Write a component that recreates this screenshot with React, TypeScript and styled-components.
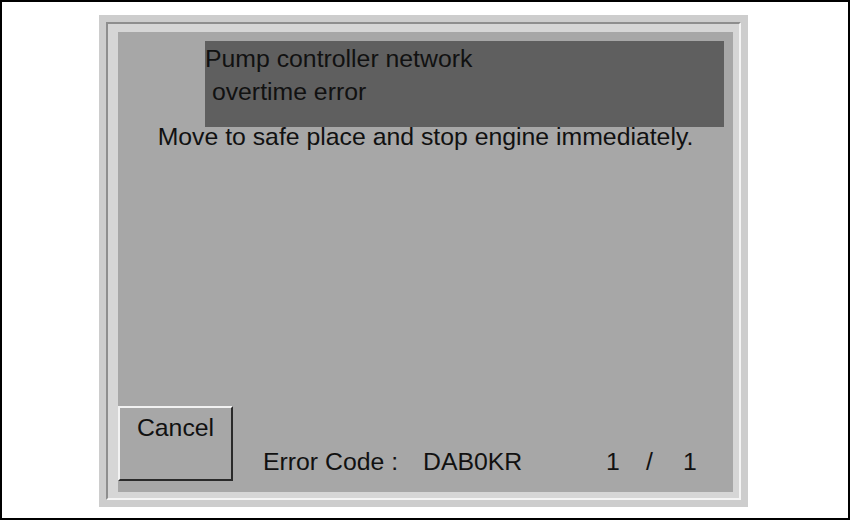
import { createGlobalStyle } from 'styled-components'
import styled from 'styled-components'

const GlobalStyle = createGlobalStyle`
  html, body {
    margin: 0;
    padding: 0;
    background: #fff;
  }
  body {
    font-family: 'Liberation Sans', Arial, sans-serif;
    color: #111;
  }
`

const Screen = styled.div`
  box-sizing: border-box;
  width: 850px;
  height: 520px;
  border: 2px solid #000;
  background: #fff;
  padding: 13px 0 0 97px;
`

const OuterFrame = styled.div`
  box-sizing: border-box;
  width: 649px;
  height: 492px;
  background: #cdcdcd;
  padding: 7px;
`

const InnerFrame = styled.div`
  box-sizing: border-box;
  height: 100%;
  background: #d6d6d6;
  border-style: solid;
  border-width: 2px;
  border-color: #8e8e8e #f4f4f4 #f4f4f4 #8e8e8e;
  padding: 8px 6px 6px 10px;
`

const Panel = styled.div`
  height: 100%;
  background: #a7a7a7;
  display: flex;
  flex-direction: column;
  font-size: 24.8px;
`

const TitleBar = styled.div`
  height: 86px;
  margin: 9px 9px 0 87px;
  padding-top: 1px;
  box-sizing: border-box;
  background: #5f5f5f;
  line-height: 33px;
  white-space: pre;
`

const Message = styled.div`
  text-align: center;
  line-height: 18px;
  margin-top: 1px;
`

const BottomRow = styled.div`
  margin-top: auto;
  margin-bottom: 11px;
  display: flex;
  align-items: flex-end;
`

const CancelButton = styled.button`
  box-sizing: border-box;
  width: 115px;
  height: 75px;
  margin: 0;
  padding: 6px 0 0;
  background: #a7a7a7;
  border-style: solid;
  border-width: 2px;
  border-color: #f2f2f2 #2a2a2a #2a2a2a #f2f2f2;
  font-family: inherit;
  font-size: inherit;
  color: #111;
  line-height: 28px;
  display: flex;
  justify-content: center;
  align-items: flex-start;
`

const InfoRow = styled.div`
  display: flex;
  line-height: 24px;
  margin: 0 0 7px 30px;
`

const InfoCell = styled.span<{ $w: number }>`
  display: inline-block;
  width: ${(p) => p.$w}px;
`

export default function App() {
  return (
    <>
      <GlobalStyle />
      <Screen>
        <OuterFrame>
          <InnerFrame>
            <Panel>
              <TitleBar>{'Pump controller network\n overtime error'}</TitleBar>
              <Message>Move to safe place and stop engine immediately.</Message>
              <BottomRow>
                <CancelButton>Cancel</CancelButton>
                <InfoRow>
                  <InfoCell $w={160}>Error Code :</InfoCell>
                  <InfoCell $w={183}>DAB0KR</InfoCell>
                  <InfoCell $w={40}>1</InfoCell>
                  <InfoCell $w={37}>/</InfoCell>
                  <InfoCell $w={20}>1</InfoCell>
                </InfoRow>
              </BottomRow>
            </Panel>
          </InnerFrame>
        </OuterFrame>
      </Screen>
    </>
  )
}
